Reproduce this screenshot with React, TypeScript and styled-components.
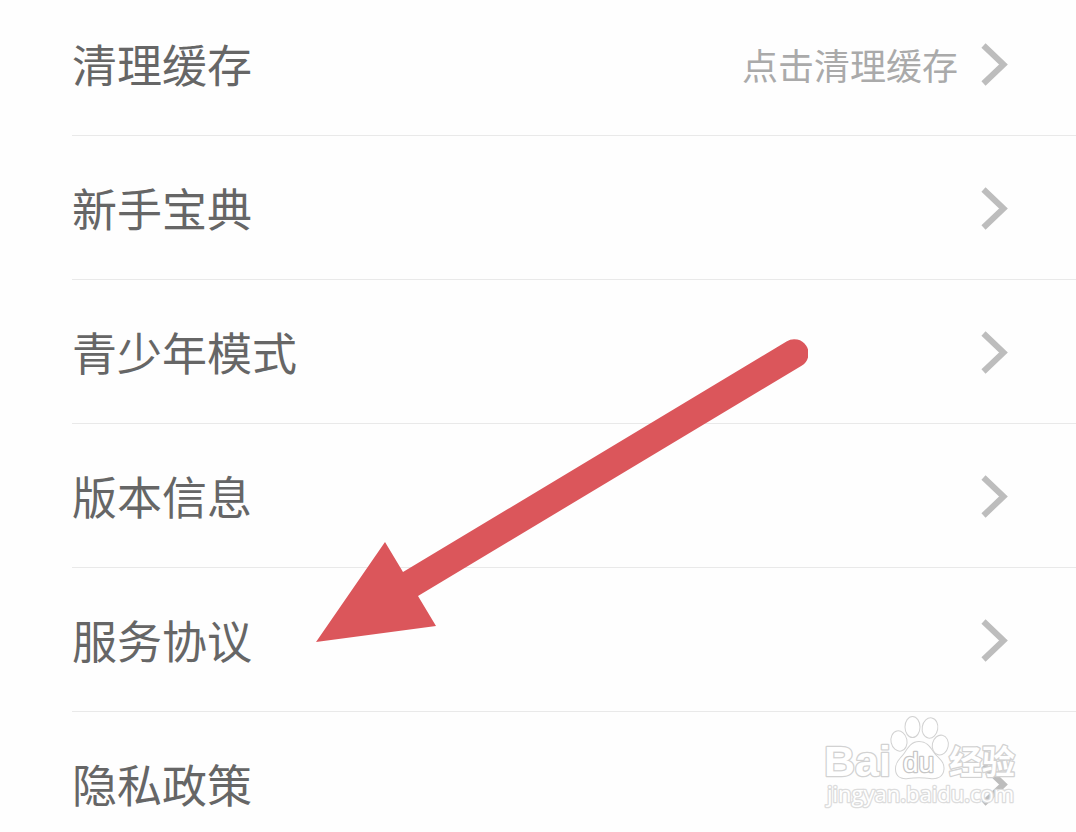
import React from "react";
import styled, { createGlobalStyle } from "styled-components";

const GlobalStyle = createGlobalStyle`
  * { box-sizing: border-box; }
  body {
    margin: 0;
    background: #fefefe;
    font-family: "Noto Sans CJK SC", sans-serif;
  }
`;

const Page = styled.main`
  position: relative;
  overflow: hidden;
`;

const SettingsList = styled.ul`
  list-style: none;
  margin: 0;
  padding: 0 0 0 72px;
`;

const SettingsItem = styled.li`
  border-bottom: 1px solid #e9e9e9;

  &:last-child { border-bottom: 0; }
`;

const RowButton = styled.button`
  display: flex;
  align-items: center;
  width: 100%;
  padding: 42px 68px 41px 0;
  border: 0;
  background: none;
  font: inherit;
  text-align: left;
  cursor: pointer;

  ${SettingsItem}:first-child & { padding-top: 34px; }
  ${SettingsItem}:last-child & { padding-bottom: 18px; }
`;

const Label = styled.span`
  flex: 1;
  color: #666;
  font-size: 45px;
  line-height: 60px;
`;

const Value = styled.span`
  margin-right: 22px;
  color: #aaa;
  font-size: 36px;
  line-height: 60px;
`;

const Chevron = styled.svg`
  flex: none;
  width: 28px;
  height: 44px;
`;

const Pointer = styled.svg`
  position: absolute;
  left: 316px;
  top: 338px;
  width: 492px;
  height: 304px;
  pointer-events: none;
`;

const Watermark = styled.svg`
  position: absolute;
  right: 52px;
  bottom: 16px;
  width: 204px;
  height: 104px;
  pointer-events: none;
`;

const items: { label: string; value?: string }[] = [
  { label: "清理缓存", value: "点击清理缓存" },
  { label: "新手宝典" },
  { label: "青少年模式" },
  { label: "版本信息" },
  { label: "服务协议" },
  { label: "隐私政策" },
];

export default function App() {
  return (
    <Page>
      <GlobalStyle />
      <SettingsList>
        {items.map((item) => (
          <SettingsItem key={item.label}>
            <RowButton type="button">
              <Label>{item.label}</Label>
              {item.value && <Value>{item.value}</Value>}
              <Chevron viewBox="0 0 28 44" aria-hidden="true">
                <path d="M3.500 3.500 23.500 22.500 3.500 41.500" fill="none" stroke="#bdbdbd" strokeWidth="6" />
              </Chevron>
            </RowButton>
          </SettingsItem>
        ))}
      </SettingsList>

      <Pointer viewBox="0 0 492 304" aria-hidden="true">
        <path
          d="M0 304 69 204 87 234 470.500 3.500A14 14 0 0 1 486 27.500L102 258 120 288Z"
          fill="#db565b"
        />
      </Pointer>

      <Watermark viewBox="0 0 204 104" aria-label="Baidu 经验">
        <g fill="#fff" stroke="#d2d2d2" strokeWidth="2.6" strokeLinejoin="round" paintOrder="stroke">
          <g strokeWidth="2">
            <ellipse cx="79" cy="29" rx="7.5" ry="9.7" transform="rotate(-12 79 29)" />
            <ellipse cx="92.5" cy="15" rx="7" ry="10" />
            <ellipse cx="110" cy="16" rx="7.3" ry="9.7" transform="rotate(10 110 16)" />
            <ellipse cx="120.300" cy="33" rx="7.5" ry="9.5" transform="rotate(12 120 33)" />
            <path d="M99 30C92 30 89 35 85 41C81 47 76 49 76 57C76 64 81 67 88 66C95 65 103 65 110 66C118 67 123 64 123.500 57C124 49 117 46 113 40C109 34 106 30 99 30Z" />
          </g>
          <text x="4" y="64" fontFamily="Liberation Sans" fontWeight="700" fontSize="43">Bai</text>
          <text x="83" y="60" fontFamily="Liberation Sans" fontSize="28" stroke="#c6c6c6">du</text>
          <text x="129" y="62" fontFamily="Noto Sans CJK SC" fontWeight="700" fontSize="33">经验</text>
          <text x="7" y="90" fontFamily="Open Sans" fontWeight="500" fontSize="22" stroke="#dcdcdc">jingyan.baidu.com</text>
        </g>
      </Watermark>
    </Page>
  );
}
